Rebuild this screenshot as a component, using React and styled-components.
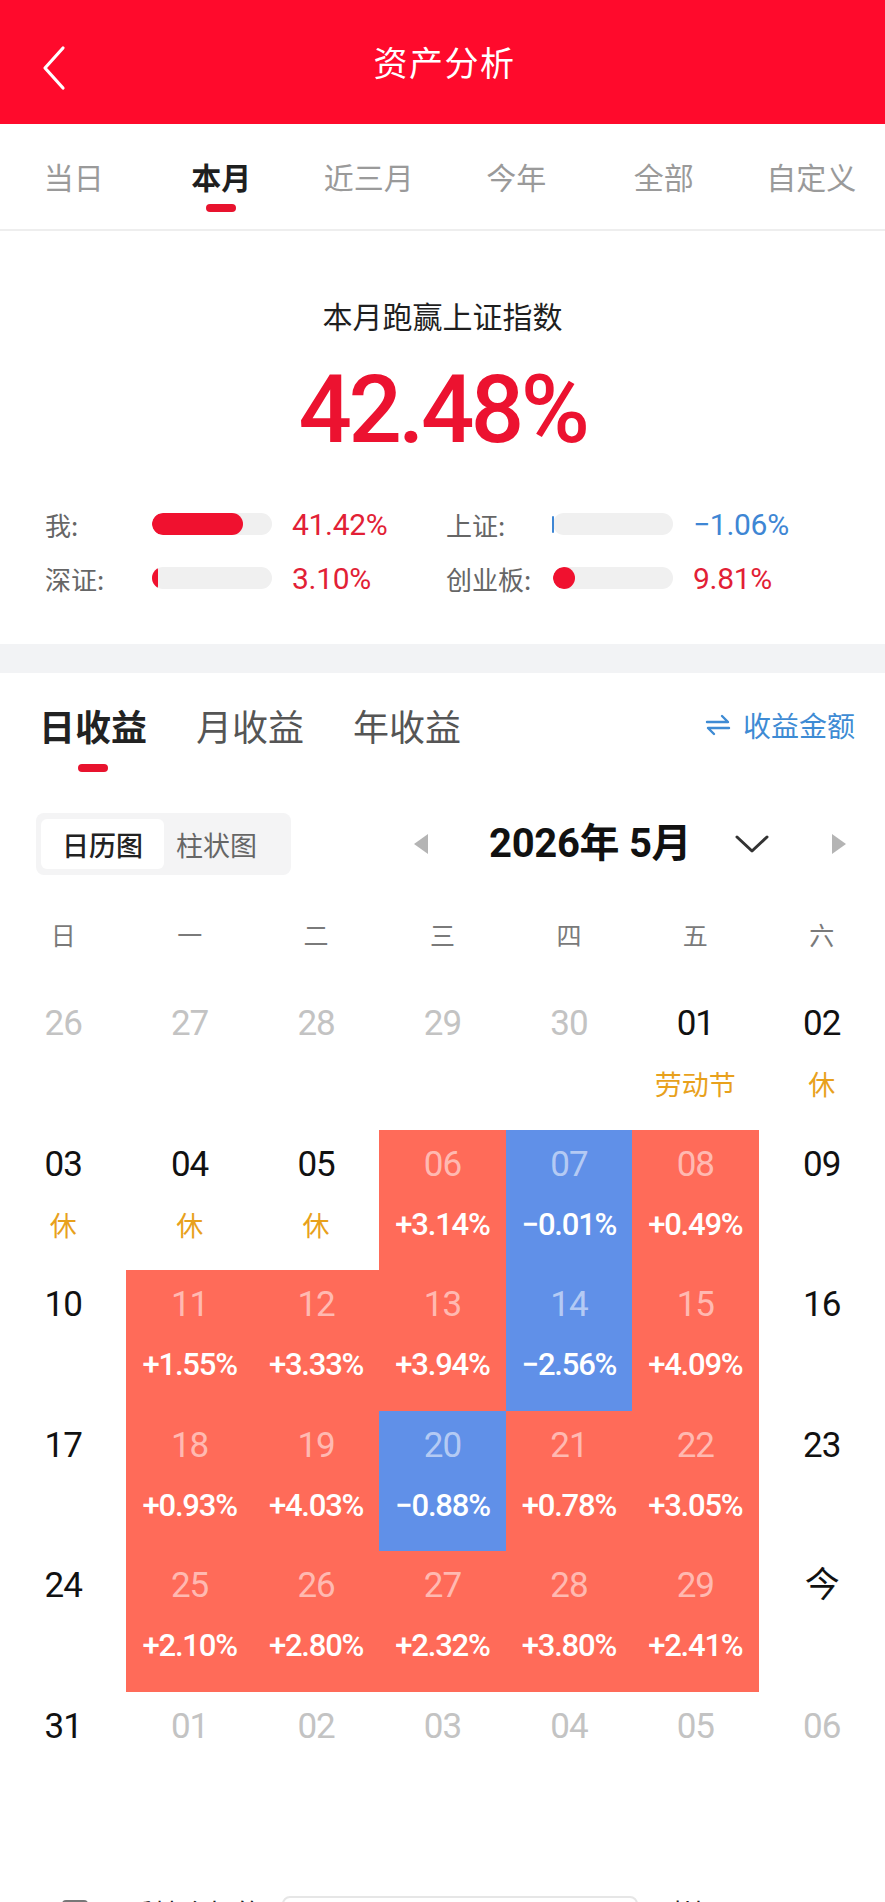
import React from "react";
import styled, { createGlobalStyle } from "styled-components";

const GlobalStyle = createGlobalStyle`
  html, body { margin: 0; padding: 0; background: #ffffff; }
  body { width: 885px; font-family: Roboto, "Noto Sans CJK SC", sans-serif; -webkit-font-smoothing: antialiased; }
  * { box-sizing: border-box; }
`;

const CJK = `"Noto Sans CJK SC", "Noto Sans", sans-serif`;
const NUM = `Roboto, "Noto Sans CJK SC", sans-serif`;

const Page = styled.div`
  width: 885px;
  background: #fff;
`;

const Header = styled.header`
  height: 124px;
  background: #ff0a2c;
  display: flex;
  align-items: center;
  justify-content: center;
  position: relative;
`;

const BackBtn = styled.div`
  position: absolute;
  left: 36px;
  top: 44px;
  width: 36px;
  height: 48px;
  display: flex;
  align-items: center;
  justify-content: center;
`;

const Title = styled.h1`
  margin: 0;
  font-family: ${CJK};
  font-weight: 400;
  font-size: 34px;
  color: #fff;
  line-height: 40px;
  letter-spacing: 1.5px;
  padding-left: 4px;
`;

const PeriodTabs = styled.nav`
  height: 107px;
  display: flex;
  border-bottom: 2px solid #eeeeee;
`;

const PeriodTab = styled.div`
  flex: 1;
  display: flex;
  flex-direction: column;
  align-items: center;
  padding-top: 32px;
  font-family: ${CJK};
  font-size: 30px;
  line-height: 40px;
  color: ${(p) => (p.$active ? "#1f1f1f" : "#9a9a9a")};
  font-weight: ${(p) => (p.$active ? 700 : 400)};
`;

const Indicator = styled.span`
  display: block;
  width: ${(p) => p.$w || 30}px;
  height: 8px;
  border-radius: 4px;
  background: ${(p) => (p.$on ? "#e8132e" : "transparent")};
  margin-top: ${(p) => p.$mt || 8}px;
`;

const Summary = styled.section`
  padding: 64px 0 46px;
  display: flex;
  flex-direction: column;
  align-items: center;
`;

const SummaryTitle = styled.div`
  font-family: ${CJK};
  font-size: 30px;
  line-height: 40px;
  color: #1f1f1f;
`;

const BigNumber = styled.div`
  margin-top: 20px;
  font-family: ${NUM};
  font-size: 94px;
  line-height: 110px;
  font-weight: 500;
  letter-spacing: -3.5px;
  color: #ec1230;
`;

const CompareGrid = styled.div`
  margin-top: 39px;
  width: 100%;
  padding-left: 45px;
  display: grid;
  grid-template-columns: 401px 1fr;
  row-gap: 14px;
`;

const CompareItem = styled.div`
  display: flex;
  align-items: center;
  height: 40px;
`;

const CompareLabel = styled.span`
  width: 107px;
  font-family: ${CJK};
  font-size: 26px;
  color: #666;
`;

const Track = styled.div`
  width: 120px;
  height: 22px;
  border-radius: 11px;
  background: #f0f0f0;
  display: flex;
  align-items: center;
  overflow: ${(p) => (p.$open ? "visible" : "hidden")};
`;

const Fill = styled.div`
  height: ${(p) => (p.$thin ? "17px" : "100%")};
  border-radius: ${(p) => (p.$thin ? "1px" : "11px")};
  margin-left: ${(p) => (p.$thin ? "-1px" : "0")};
  background: ${(p) => (p.$neg ? "#3e86d4" : "#f0112f")};
`;

const CompareValue = styled.span`
  margin-left: 20px;
  font-family: ${NUM};
  font-size: 30px;
  letter-spacing: -0.3px;
  color: ${(p) => (p.$neg ? "#3e86d4" : "#e21f36")};
`;

const GapBand = styled.div`
  height: 29px;
  background: #f2f3f5;
`;

const Returns = styled.section`
  padding-top: 27px;
`;

const ReturnsHead = styled.div`
  display: flex;
  align-items: flex-start;
  padding: 0 30px 0 39px;
`;

const ReturnTab = styled.div`
  display: flex;
  flex-direction: column;
  align-items: center;
  margin-right: 49px;
  font-family: ${CJK};
  font-size: 36px;
  line-height: 50px;
  color: ${(p) => (p.$active ? "#222" : "#555")};
  font-weight: ${(p) => (p.$active ? 700 : 400)};
`;

const SwitchLink = styled.div`
  margin-left: auto;
  display: flex;
  align-items: center;
  gap: 12px;
  font-family: ${CJK};
  font-size: 28px;
  line-height: 50px;
  color: #3e8bd4;
`;

const ToolRow = styled.div`
  margin-top: 41px;
  height: 62px;
  display: flex;
  align-items: center;
  padding-left: 36px;
`;

const Segment = styled.div`
  width: 255px;
  height: 62px;
  padding: 6px 5px;
  background: #f4f4f5;
  border-radius: 8px;
  display: flex;
  align-items: stretch;
  gap: 12px;
`;

const SegItem = styled.div`
  width: ${(p) => (p.$active ? "123px" : "auto")};
  display: flex;
  align-items: center;
  justify-content: center;
  border-radius: 6px;
  background: ${(p) => (p.$active ? "#ffffff" : "transparent")};
  font-family: ${CJK};
  font-size: 27px;
  color: ${(p) => (p.$active ? "#222" : "#666")};
  font-weight: ${(p) => (p.$active ? 500 : 400)};
`;

const MonthNav = styled.div`
  display: flex;
  align-items: center;
  margin-left: 122px;
`;

const MonthTitle = styled.div`
  margin-left: 60px;
  font-family: ${NUM};
  font-size: 40px;
  font-weight: 700;
  color: #111;
  line-height: 50px;
  letter-spacing: -0.3px;
`;

const ChevronBox = styled.div`
  margin-left: 44px;
  display: flex;
  align-items: center;
`;

const RightArrowBox = styled.div`
  margin-left: 62px;
  display: flex;
  align-items: center;
`;

const WeekRow = styled.div`
  margin-top: 39px;
  display: grid;
  grid-template-columns: repeat(7, 1fr);
  height: 40px;
`;

const WeekDay = styled.div`
  text-align: center;
  font-family: ${CJK};
  font-size: 25px;
  line-height: 40px;
  color: #7a7a7a;
`;

const CalGrid = styled.div`
  margin-top: 35px;
  display: grid;
  grid-template-columns: repeat(7, 1fr);
  grid-auto-rows: 140.6px;
`;

const toneBg = { red: "#ff6b59", blue: "#6090e8" };

const Cell = styled.div`
  display: flex;
  flex-direction: column;
  align-items: center;
  padding-top: 15px;
  background: ${(p) => toneBg[p.$tone] || "transparent"};
`;

const dateColor = {
  muted: "#c3c3c3",
  normal: "#111111",
  onColor: "rgba(255,255,255,0.55)",
};

const DateNum = styled.div`
  font-family: ${NUM};
  font-size: 35px;
  line-height: 40px;
  letter-spacing: -1px;
  color: ${(p) => dateColor[p.$variant]};
`;

const SubText = styled.div`
  margin-top: 20px;
  line-height: 40px;
  font-family: ${(p) => (p.$kind === "pct" ? NUM : CJK)};
  font-size: ${(p) => (p.$kind === "pct" ? "31px" : "27px")};
  font-weight: ${(p) => (p.$kind === "pct" ? 500 : 400)};
  letter-spacing: ${(p) => (p.$kind === "pct" ? "-1.2px" : "0")};
  color: ${(p) => (p.$kind === "pct" ? "#ffffff" : "#e8a11c")};
`;

const FilterRow = styled.div`
  margin-top: 63px;
  height: 56px;
  display: flex;
  align-items: flex-start;
  padding-left: 62px;
  gap: 12px;
`;

const CheckBox = styled.div`
  margin-top: 4px;
  width: 26px;
  height: 26px;
  border: 2px solid #777;
  border-radius: 4px;
`;

const FilterText = styled.div`
  font-family: ${CJK};
  font-size: 27px;
  line-height: 34px;
  color: #222;
  width: 170px;
`;

const FilterBox = styled.div`
  width: 356px;
  height: 52px;
  border: 2px solid #e6e6e6;
  border-radius: 8px;
`;

const FilterTail = styled.div`
  margin-left: 6px;
  font-family: ${CJK};
  font-size: 27px;
  line-height: 34px;
  color: #222;
`;

const periodTabs = ["当日", "本月", "近三月", "今年", "全部", "自定义"];

const compare = [
  { label: "我:", value: "41.42%", pct: 76 },
  { label: "上证:", value: "−1.06%", pct: 0, neg: true },
  { label: "深证:", value: "3.10%", pct: 5 },
  { label: "创业板:", value: "9.81%", pct: 18.4 },
];

const weekDays = ["日", "一", "二", "三", "四", "五", "六"];

const m = (d) => ({ d, v: "muted" });
const n = (d, sub) => ({ d, v: "normal", sub });
const r = (d, p) => ({ d, v: "onColor", tone: "red", pct: p });
const b = (d, p) => ({ d, v: "onColor", tone: "blue", pct: p });

const days = [
  m("26"), m("27"), m("28"), m("29"), m("30"), n("01", "劳动节"), n("02", "休"),
  n("03", "休"), n("04", "休"), n("05", "休"), r("06", "+3.14%"), b("07", "−0.01%"), r("08", "+0.49%"), n("09"),
  n("10"), r("11", "+1.55%"), r("12", "+3.33%"), r("13", "+3.94%"), b("14", "−2.56%"), r("15", "+4.09%"), n("16"),
  n("17"), r("18", "+0.93%"), r("19", "+4.03%"), b("20", "−0.88%"), r("21", "+0.78%"), r("22", "+3.05%"), n("23"),
  n("24"), r("25", "+2.10%"), r("26", "+2.80%"), r("27", "+2.32%"), r("28", "+3.80%"), r("29", "+2.41%"), n("今"),
  n("31"), m("01"), m("02"), m("03"), m("04"), m("05"), m("06"),
];

function BackIcon() {
  return (
    <svg width="30" height="46" viewBox="0 0 30 46">
      <polyline points="24,3 6,23 24,43" fill="none" stroke="#fff" strokeWidth="3.2" strokeLinecap="round" strokeLinejoin="round" />
    </svg>
  );
}

function SwapIcon() {
  return (
    <svg width="26" height="24" viewBox="0 0 26 24">
      <path d="M2 9 H23 L17 3" fill="none" stroke="#3e8bd4" strokeWidth="2.4" strokeLinecap="round" strokeLinejoin="round" />
      <path d="M24 15 H3 L9 21" fill="none" stroke="#3e8bd4" strokeWidth="2.4" strokeLinecap="round" strokeLinejoin="round" />
    </svg>
  );
}

function Triangle({ dir }) {
  return (
    <svg width="16" height="22" viewBox="0 0 16 22">
      {dir === "left" ? (
        <polygon points="15,1 1,11 15,21" fill="#b4b4b4" />
      ) : (
        <polygon points="1,1 15,11 1,21" fill="#b4b4b4" />
      )}
    </svg>
  );
}

function ChevronDown() {
  return (
    <svg width="34" height="20" viewBox="0 0 34 20">
      <polyline points="2,3 17,17 32,3" fill="none" stroke="#333" strokeWidth="3" strokeLinecap="round" strokeLinejoin="round" />
    </svg>
  );
}

export default function App() {
  return (
    <Page>
      <GlobalStyle />
      <Header>
        <BackBtn>
          <BackIcon />
        </BackBtn>
        <Title>资产分析</Title>
      </Header>

      <PeriodTabs>
        {periodTabs.map((t) => (
          <PeriodTab key={t} $active={t === "本月"}>
            {t}
            <Indicator $on={t === "本月"} />
          </PeriodTab>
        ))}
      </PeriodTabs>

      <Summary>
        <SummaryTitle>本月跑赢上证指数</SummaryTitle>
        <BigNumber>42.48%</BigNumber>
        <CompareGrid>
          {compare.map((c) => (
            <CompareItem key={c.label}>
              <CompareLabel>{c.label}</CompareLabel>
              <Track $open={c.neg}>
                {c.neg ? (
                  <Fill $neg $thin style={{ width: "2px" }} />
                ) : (
                  <Fill style={{ width: `${c.pct}%` }} />
                )}
              </Track>
              <CompareValue $neg={c.neg}>{c.value}</CompareValue>
            </CompareItem>
          ))}
        </CompareGrid>
      </Summary>

      <GapBand />

      <Returns>
        <ReturnsHead>
          <ReturnTab $active>
            日收益
            <Indicator $on $w={30} $mt={14} />
          </ReturnTab>
          <ReturnTab>月收益</ReturnTab>
          <ReturnTab>年收益</ReturnTab>
          <SwitchLink>
            <SwapIcon />
            收益金额
          </SwitchLink>
        </ReturnsHead>

        <ToolRow>
          <Segment>
            <SegItem $active>日历图</SegItem>
            <SegItem>柱状图</SegItem>
          </Segment>
          <MonthNav>
            <Triangle dir="left" />
            <MonthTitle>2026年 5月</MonthTitle>
            <ChevronBox>
              <ChevronDown />
            </ChevronBox>
            <RightArrowBox>
              <Triangle dir="right" />
            </RightArrowBox>
          </MonthNav>
        </ToolRow>

        <WeekRow>
          {weekDays.map((w) => (
            <WeekDay key={w}>{w}</WeekDay>
          ))}
        </WeekRow>

        <CalGrid>
          {days.map((c, i) => (
            <Cell key={i} $tone={c.tone}>
              <DateNum $variant={c.v}>{c.d}</DateNum>
              {c.pct && <SubText $kind="pct">{c.pct}</SubText>}
              {c.sub && <SubText $kind="holiday">{c.sub}</SubText>}
            </Cell>
          ))}
        </CalGrid>

        <FilterRow>
          <CheckBox />
          <FilterText>只看持仓标的</FilterText>
          <FilterBox />
          <FilterTail>对比</FilterTail>
        </FilterRow>
      </Returns>
    </Page>
  );
}
